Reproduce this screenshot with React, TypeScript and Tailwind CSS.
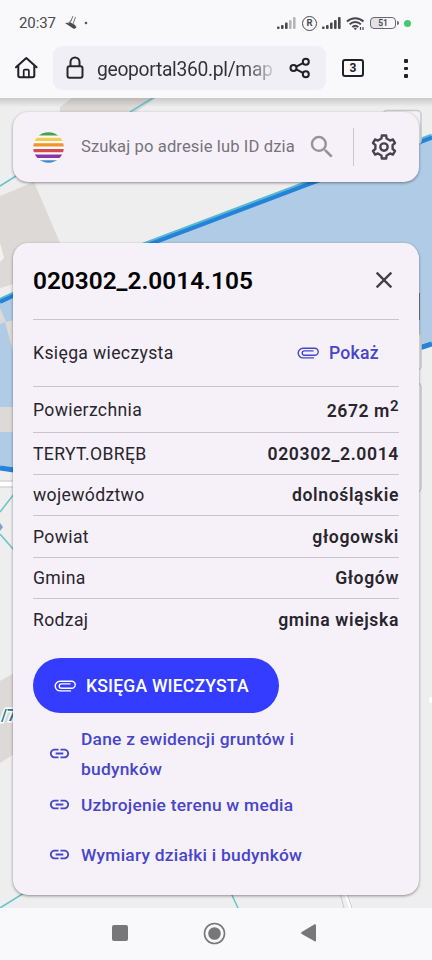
import type { ReactNode } from 'react';
import { MdClose, MdLink, MdSearch } from 'react-icons/md';

const details = [
  { label: 'TERYT.OBRĘB', value: '020302_2.0014' },
  { label: 'województwo', value: 'dolnośląskie' },
  { label: 'Powiat', value: 'głogowski' },
  { label: 'Gmina', value: 'Głogów' },
  { label: 'Rodzaj', value: 'gmina wiejska' },
];

function ClipIcon() {
  return (
    <svg className="shrink-0" width="22" height="14" viewBox="0 0 22 14" fill="none" stroke="currentColor" strokeWidth="1.4" strokeLinecap="round">
      <path d="M16.5 11.9H6a4.8 4.8 0 0 1 0-9.6h11.7a3.5 3.5 0 0 1 0 7H7.4a2.2 2.2 0 0 1 0-4.4H16" />
    </svg>
  );
}

function GearIcon() {
  return (
    <svg width="26" height="26" viewBox="-12 -12 24 24" fill="none" stroke="#45434c" strokeWidth="2.2" strokeLinejoin="round">
      <path d="M-2-10.6H2L2.4-7.8 5.57-5.97 8.18-7.03 10.18-3.57 7.95-1.84V1.84L10.18 3.57 8.18 7.03 5.57 5.97 2.4 7.8 2 10.6H-2L-2.4 7.8-5.57 5.97-8.18 7.03-10.18 3.57-7.95 1.84V-1.84L-10.18-3.57-8.18-7.03-5.57-5.97-2.4-7.8z" />
      <circle r="3.4" />
    </svg>
  );
}

function Signal({ weak = false }: { weak?: boolean }) {
  return (
    <svg width="19" height="13" viewBox="0 0 19 13" fill="#47474c">
      <rect x="0" y="9.5" width="2.6" height="2.5" rx="1" />
      <rect x="4" y="8" width="2.6" height="4" rx="1" />
      <rect x="8" y="5.5" width="2.6" height="6.5" rx="1" />
      <rect x="12" y="3" width="2.6" height="9" rx="1" fill={weak ? '#b5b5b9' : '#47474c'} />
      <rect x="16" y="0" width="2.6" height="12" rx="1" fill={weak ? '#b5b5b9' : '#47474c'} />
    </svg>
  );
}

function StatusBar() {
  return (
    <div className="flex h-[46px] items-center pl-[19px] pr-[21px] text-[#4a4a4e]">
      <span className="mt-px text-[15px] tracking-[-0.1px]">20:37</span>
      <svg className="ml-2 -mt-0.5" width="26" height="16" viewBox="0 0 26 16">
        <path d="M1 9l5.5-.5L11 11l1.5 2.5L10 15z" fill="#4a4a4e" />
        <path d="M6 9l3-7M9 10l2.5-7M4 10l4-5" stroke="#77777b" strokeWidth="1" />
        <circle cx="22" cy="9" r="1.3" fill="#55555a" />
      </svg>
      <div className="ml-auto flex items-center">
        <Signal weak />
        <span className="ml-[6px] flex size-[15px] items-center justify-center rounded-full border-[1.5px] border-[#4a4a4e] text-[9.5px] font-bold leading-none">R</span>
        <div className="ml-[5px] flex"><Signal /></div>
        <svg className="ml-[5px]" width="20" height="15" viewBox="0 0 20 15" fill="none" stroke="#47474c" strokeWidth="1.9">
          <path d="M1 5.5a12 12 0 0 1 16.5 0M3.6 8.3a8 8 0 0 1 11.3 0M6.3 11a4.5 4.5 0 0 1 6 0" />
          <path d="M7.5 11.8h3.6l-1.8 2.4z" fill="#47474c" stroke="none" />
          <path d="M14.5 14v-3M17 11v3" strokeWidth="1.2" />
        </svg>
        <span className="ml-[4px] flex h-[12px] w-[26px] items-center justify-center rounded-[4px] border-[1.5px] border-[#68686d] bg-linear-to-r from-[#e2e2e6] from-50% to-transparent to-50% text-[8.5px] font-semibold leading-none">51</span>
        <span className="ml-px h-[4px] w-[2px] rounded-r bg-[#68686d]" />
        <span className="ml-[5px] size-[7px] rounded-full bg-[#41c96c]" />
      </div>
    </div>
  );
}

function AddressBar() {
  return (
    <div className="flex h-[52px] items-start">
      <svg className="ml-[14px] mt-[10px]" width="25" height="24" viewBox="0 0 25 24" fill="none" stroke="#202026" strokeWidth="2" strokeLinecap="round" strokeLinejoin="round">
        <path d="M2 11.3L12.3 2 22.6 11.3M4.3 9.8v9.7q0 1.7 1.7 1.7h12.6q1.7 0 1.7-1.7V9.8" />
        <path d="M9.7 20.8v-6q0-1.1 1.1-1.1h3q1.1 0 1.1 1.1v6" strokeWidth="1.7" />
      </svg>
      <div className="ml-[14px] flex h-[44px] w-[273px] items-center rounded-[9px] bg-[#f0eff5]">
        <svg className="ml-[13px] shrink-0" width="18" height="24" viewBox="0 0 18 24" fill="none" stroke="#28282e" strokeWidth="2">
          <rect x="1.5" y="10.2" width="15" height="11.6" rx="2" />
          <path d="M4.5 10V6a4.5 4.5 0 0 1 9 0v4" />
        </svg>
        <span className="ml-[13px] w-[178px] bg-linear-to-r from-[#303036] from-82% to-[#dcdce1] bg-clip-text whitespace-nowrap pt-[3px] text-[19.3px] leading-7 tracking-[-0.32px] text-transparent">geoportal360.pl/map</span>
        <svg className="ml-[14px] shrink-0" width="22" height="22" viewBox="0 0 22 22" fill="none" stroke="#202026" strokeWidth="2">
          <circle cx="4.5" cy="11" r="3" />
          <circle cx="16.8" cy="4.8" r="3" />
          <circle cx="16.8" cy="17.2" r="3" />
          <path d="M7.2 9.6l6.8-3.4M7.2 12.4l6.8 3.4" />
        </svg>
      </div>
      <span className="ml-[16px] mt-[13px] flex h-[18px] w-[22px] items-center justify-center rounded-[3px] border-2 border-[#202026] text-[12px] font-bold leading-none text-[#202026]">3</span>
      <div className="ml-[40px] mt-[13px] flex flex-col gap-1">
        <span className="h-[3.5px] w-[3.5px] rounded-[1px] bg-[#202026]" />
        <span className="h-[3.5px] w-[3.5px] rounded-[1px] bg-[#202026]" />
        <span className="h-[3.5px] w-[3.5px] rounded-[1px] bg-[#202026]" />
      </div>
    </div>
  );
}

function MapBackground() {
  return (
    <svg className="absolute inset-0" width="432" height="810" viewBox="0 98 432 810">
      <rect y="98" width="432" height="810" fill="#eeeeee" />
      {/* buildings */}
      <path d="M72 98h84l-20 14H60v-5z" fill="#dcd9d7" />
      <path d="M0 196l34-14 26 61-46 41-14 4z" fill="#dcd9d7" />
      <path d="M0 243l4 15-4 4z" fill="#f4f2ef" />
      {/* selected parcel */}
      <path d="M0 302L432 137V345L14 468H0z" fill="#b0cbe5" />
      <path d="M0 308l6 14 8-2v35l-9-33-5 2z" fill="#dcd9d7" />
      <rect y="407" width="14" height="25" fill="#dcd9d7" />
      <path d="M0 300.5L14 294 432 136" stroke="#56b8d5" strokeWidth="5" fill="none" />
      <path d="M0 302L14 295.5 432 137.5" stroke="#2482d8" strokeWidth="4" fill="none" />
      <path d="M0 468l14 2M413 350l19-6" stroke="#2482d8" strokeWidth="5" />
      <path d="M0 186l16-10M130 112l26-16M0 512l14-18M0 534l14 16M0 908l24-15M231 893l7 15" stroke="#69c3cf" strokeWidth="1.5" />
      <path d="M0 484h14" stroke="#fff" strokeWidth="5" />
      <path d="M0 481h14M0 487h14" stroke="#cbc9c8" />
      <path d="M0 523l3 4-3 4z" fill="#819fc8" />
      <path d="M0 681l14-8v81L0 763z" fill="#dcd9d7" />
      <path d="M344 893l5 15h4l-5-15z" fill="#fff" />
      <path d="M340 893l4 15M347 893l5 15" stroke="#c8c8c9" />
      <circle cx="432" cy="700" r="3" fill="#fff" />
      <text x="1" y="721" fontSize="16" fontWeight="600" fill="#287c98" stroke="#fff" strokeWidth="3" paintOrder="stroke">/7</text>
      {/* map controls, mostly behind the card */}
      <g fill="#f3f2f3" stroke="#c8c8ca" strokeWidth="1.5">
        <rect x="383" y="110.5" width="38" height="34" rx="4" />
        <rect x="391" y="333" width="30" height="37" rx="4" />
        <rect x="391" y="383" width="30" height="109" rx="4" />
      </g>
      <path d="M419.5 293v27" stroke="#77777c" />
    </svg>
  );
}

function SearchBox() {
  return (
    <div className="flex h-[70px] items-center rounded-[15px] bg-[#f6f1f8] shadow-[0_1px_3px_rgba(0,0,0,0.42)]">
      <svg className="ml-[20px] shrink-0" width="31" height="31" viewBox="0 0 31 31">
        <clipPath id="disc"><circle cx="15.5" cy="15.5" r="15.3" /></clipPath>
        <path d="M0 0h31v31H0z" fill="#fff8f5" clipPath="url(#disc)" />
        <g clipPath="url(#disc)">
          <path d="M0 0h31v3.4H0z" fill="#48a151" />
          <path d="M0 5.8h31v3.3H0z" fill="#f2cd51" />
          <path d="M0 11.3h31v3.3H0z" fill="#ed9533" />
          <path d="M0 16.9h31v3.3H0z" fill="#d14a51" />
          <path d="M0 22.6h31v3.3H0z" fill="#8735a8" />
          <path d="M0 28.2h31V31H0z" fill="#408acb" />
        </g>
      </svg>
      <span className="ml-[17px] w-[214px] whitespace-nowrap text-[16.6px] tracking-[0.11px] text-[#77737c]">Szukaj po adresie lub ID dzia</span>
      <MdSearch className="ml-[12px] size-[30px] shrink-0 text-[#96949a]" />
      <span className="ml-[16px] h-[38px] w-px bg-[#cbc7ce]" />
      <div className="ml-[17px]"><GearIcon /></div>
    </div>
  );
}

function ParcelLink({ children, className = '' }: { children: ReactNode; className?: string }) {
  return (
    <a href="#" className={`flex items-center pl-[15px] text-[17.4px] font-medium tracking-[0.23px] text-[#4745ca] ${className}`}>
      <MdLink className="mr-[10px] size-[23px] shrink-0" />
      <span className="w-[228px] leading-[30px]">{children}</span>
    </a>
  );
}

function ParcelCard() {
  return (
    <section className="mt-[61px] h-[652px] rounded-[15px] bg-[#f6f1f8] px-[20px] text-[#29252e] shadow-[0_1px_3px_rgba(0,0,0,0.42)]">
      <header className="flex h-[77px] items-center justify-between border-b-[1.5px] border-[#cac4cb]">
        <h1 className="text-[24.4px] font-semibold text-black">020302_2.0014.105</h1>
        <button type="button" aria-label="Zamknij" className="mr-[1px] -mt-[3px]">
          <MdClose className="size-[28px] text-[#414046]" />
        </button>
      </header>
      <div className="flex h-[67px] items-center justify-between border-b-[1.5px] border-[#cac4cb] text-[17.6px]">
        <span className="tracking-[0.35px]">Księga wieczysta</span>
        <span className="mr-[20px] flex items-center gap-[10px] font-medium tracking-[0.3px] text-[#4745ca]"><ClipIcon />Pokaż</span>
      </div>
      <div className="flex h-[46px] items-center justify-between border-b-[1.5px] border-[#cac4cb] pt-[1px] text-[17.6px]">
        <span className="tracking-[0.35px]">Powierzchnia</span>
        <strong className="pt-[3px] font-semibold tracking-[0.55px]">2672 m<sup className="text-[15px] top-[-0.42em]">2</sup></strong>
      </div>
      {details.map(({ label, value }) => (
        <div key={label} className="flex h-[41.6px] items-center justify-between border-b-[1.5px] border-[#cac4cb] pt-[1px] text-[17.6px] last-of-type:border-0">
          <span className="tracking-[0.35px]">{label}</span>
          <strong className="font-semibold tracking-[0.62px]">{value}</strong>
        </div>
      ))}
      <button type="button" className="mt-[17px] flex h-[55px] w-[246px] items-center gap-[10px] rounded-full bg-[#343cff] pl-[21px] pt-px text-[17.6px] font-medium tracking-[0.17px] whitespace-nowrap text-white">
        <ClipIcon />KSIĘGA WIECZYSTA
      </button>
      <nav>
        <ParcelLink className="mt-[11px] h-[60px]">Dane z ewidencji gruntów i budynków</ParcelLink>
        <ParcelLink className="h-[42px]">Uzbrojenie terenu w media</ParcelLink>
        <ParcelLink className="mt-[4px] h-[50px]">Wymiary działki i budynków</ParcelLink>
      </nav>
    </section>
  );
}

function NavigationBar() {
  return (
    <footer className="flex h-[50px] items-center bg-[#f9f9fb] pl-[112px] text-[#77777a]">
      <span className="size-4 rounded-[2px] bg-[#77777a]" />
      <svg className="ml-[75px]" width="23" height="23" viewBox="0 0 23 23" fill="none" stroke="currentColor">
        <circle cx="11.5" cy="11.5" r="10" strokeWidth="1.6" />
        <circle cx="11.5" cy="11.5" r="6.3" fill="currentColor" stroke="none" />
      </svg>
      <svg className="ml-[75px]" width="15" height="18" viewBox="0 0 15 18" fill="currentColor">
        <path d="M13.6.3Q15 0 15 1.5v15q0 1.5-1.3.8L.7 10Q-.5 9 .7 8z" />
      </svg>
    </footer>
  );
}

export default function App() {
  return (
    <div className="h-[960px] w-[432px] overflow-hidden bg-[#f9f9fb] font-['Roboto','Noto_Sans',sans-serif]">
      <StatusBar />
      <AddressBar />
      <main className="relative h-[810px] overflow-hidden">
        <MapBackground />
        <div className="relative px-[13px] pt-[14px]">
          <SearchBox />
          <ParcelCard />
        </div>
        <div className="pointer-events-none absolute inset-x-0 top-0 h-[9px] bg-linear-to-b from-black/15 to-transparent" />
      </main>
      <NavigationBar />
    </div>
  );
}
